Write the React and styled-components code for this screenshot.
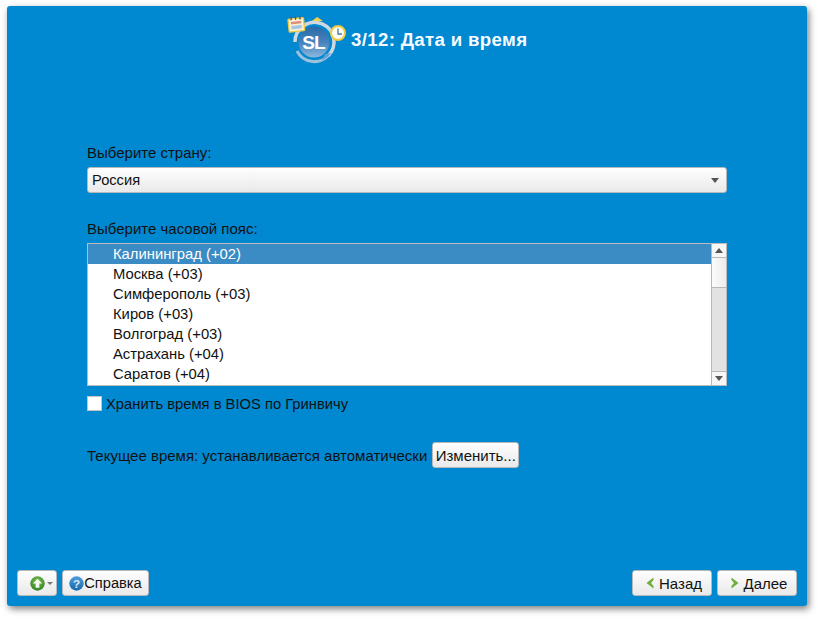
import React from 'react';
import styled, { createGlobalStyle } from 'styled-components';

const zones = [
  'Калининград (+02)',
  'Москва (+03)',
  'Симферополь (+03)',
  'Киров (+03)',
  'Волгоград (+03)',
  'Астрахань (+04)',
  'Саратов (+04)'
];

export default function App() {
  return (
    <>
      <GlobalStyle />
      <Window>
        <Header>
          <SlLogo />
          <Title>3/12: Дата и время</Title>
        </Header>
        <Content>
          <FieldLabel>Выберите страну:</FieldLabel>
          <Combo>
            <span>Россия</span>
            <Arrow />
          </Combo>
          <ListLabel>Выберите часовой пояс:</ListLabel>
          <ListBox>
            <Rows>
              {zones.map((zone, i) => (
                <Row key={zone} $selected={i === 0}>{zone}</Row>
              ))}
            </Rows>
            <ScrollBar>
              <ScrollEnd><Arrow $up /></ScrollEnd>
              <Thumb />
              <Track />
              <ScrollEnd $bottom><Arrow /></ScrollEnd>
            </ScrollBar>
          </ListBox>
          <CheckRow>
            <CheckBox />
            <span>Хранить время в BIOS по Гринвичу</span>
          </CheckRow>
          <TimeRow>
            <span>Текущее время: устанавливается автоматически</span>
            <Button $width={87}>Изменить...</Button>
          </TimeRow>
        </Content>
        <Footer>
          <UpButton $width={40}>
            <UpIcon />
            <SmallArrow />
          </UpButton>
          <HelpButton $width={87}>
            <HelpIcon />
            Справка
          </HelpButton>
          <Spacer />
          <NavButton $width={80}>
            <ChevronIcon $back />
            Назад
          </NavButton>
          <NavButton $width={80}>
            <ChevronIcon />
            Далее
          </NavButton>
        </Footer>
      </Window>
    </>
  );
}

function SlLogo() {
  return (
    <LogoSvg viewBox="0 0 60 54" width="60" height="54">
      <defs>
        <linearGradient id="ball" x1="0" y1="0" x2="0" y2="1">
          <stop offset="0" stopColor="#2a69a8" />
          <stop offset="0.55" stopColor="#4a86bf" />
          <stop offset="1" stopColor="#8db8de" />
        </linearGradient>
      </defs>
      <path d="M8 30 A19.5 19.5 0 1 1 41 44" fill="none" stroke="#cfd8e0" strokeWidth="3.5" />
      <path d="M41 44 A19.5 19.5 0 0 1 10 39" fill="none" stroke="#9fc0da" strokeWidth="3" />
      <path d="M35 49 L38 42 L45 41 Z" fill="#5f9fd4" />
      <circle cx="27" cy="30" r="15.5" fill="url(#ball)" />
      <path d="M25 9 L30 5 L36 9 Z" fill="#f2d24a" />
      <g transform="rotate(-6 13 12)">
        <rect x="1.5" y="6" width="15.5" height="13" rx="1" fill="#fbf5d8" stroke="#efc94a" strokeWidth="1.4" />
        <rect x="4" y="4" width="1.3" height="3.5" fill="#555" />
        <rect x="8.5" y="4" width="1.3" height="3.5" fill="#555" />
        <rect x="13" y="4" width="1.3" height="3.5" fill="#555" />
        <rect x="4" y="9" width="10.5" height="2.5" fill="#dd8f78" />
        <rect x="4" y="13" width="10.5" height="3.5" fill="#a9c4e0" />
      </g>
      <circle cx="51" cy="21" r="7" fill="#fdfdf6" stroke="#f0c93c" strokeWidth="2" />
      <path d="M51 16.5 V22 H55" fill="none" stroke="#4a78a8" strokeWidth="1.3" />
      <text x="26.5" y="37" textAnchor="middle" fontFamily="Liberation Sans, sans-serif" fontWeight="700" fontSize="19" fill="#fff" letterSpacing="-1">SL</text>
    </LogoSvg>
  );
}

function UpIcon() {
  return (
    <svg width="15" height="15" viewBox="0 0 16 16">
      <defs>
        <radialGradient id="upBall" cx="0.5" cy="0.35" r="0.7">
          <stop offset="0" stopColor="#7cc254" />
          <stop offset="1" stopColor="#2f7a22" />
        </radialGradient>
      </defs>
      <circle cx="8" cy="8" r="7.7" fill="url(#upBall)" />
      <path d="M8 3 L13 8 H10 V12.5 H6 V8 H3 Z" fill="#f4f8ef" />
    </svg>
  );
}

function HelpIcon() {
  return (
    <svg width="15" height="15" viewBox="0 0 16 16">
      <defs>
        <linearGradient id="helpBall" x1="0" y1="0" x2="0" y2="1">
          <stop offset="0" stopColor="#4f9fdc" />
          <stop offset="1" stopColor="#1567ad" />
        </linearGradient>
      </defs>
      <circle cx="8" cy="8" r="7.7" fill="url(#helpBall)" />
      <text x="8" y="12.5" textAnchor="middle" fontFamily="Liberation Sans, sans-serif" fontWeight="700" fontSize="12.5" fill="#dcebf7">?</text>
    </svg>
  );
}

function ChevronIcon({ $back }) {
  return (
    <ChevronSvg width="8" height="12" viewBox="0 0 8 12">
      <path d={$back ? 'M7.5 0.5 L0.5 6 L7.5 11.5 V9 L5 6 L7.5 3 Z' : 'M0.5 0.5 L7.5 6 L0.5 11.5 V9 L3 6 L0.5 3 Z'} fill="#6fae3c" />
    </ChevronSvg>
  );
}

const GlobalStyle = createGlobalStyle`
  html, body {
    margin: 0;
    height: 100%;
    background: #fff;
  }
  body {
    font-family: "Liberation Sans", Arial, sans-serif;
    font-size: 15px;
    color: #111;
  }
`;

const Window = styled.div`
  width: 800px;
  height: 600px;
  margin: 6px 0 0 7px;
  background: #0088d1;
  border-radius: 3px;
  box-shadow: 2px 3px 7px rgba(0, 0, 0, 0.5);
  display: flex;
  flex-direction: column;
`;

const Header = styled.div`
  height: 65px;
  padding-left: 280px;
  display: flex;
  align-items: center;
  gap: 5px;
`;

const LogoSvg = styled.svg`
  flex: none;
  margin-top: 1px;
`;

const Title = styled.div`
  font-size: 18.67px;
  font-weight: 700;
  color: #f6fbff;
  letter-spacing: 0.33px;
  margin: 2px 0 0 -1px;
`;

const Content = styled.div`
  width: 640px;
  margin: 73px 0 0 80px;
  display: flex;
  flex-direction: column;
`;

const FieldLabel = styled.div`
  height: 17px;
  line-height: 17px;
  margin-bottom: 6px;
`;

const ListLabel = styled(FieldLabel)`
  margin: 27px 0 6px;
`;

const Combo = styled.div`
  height: 26px;
  box-sizing: border-box;
  padding: 0 7px 0 4px;
  display: flex;
  align-items: center;
  justify-content: space-between;
  font-size: 14.67px;
  background: linear-gradient(#fefefe, #e9e9e9);
  border: 1px solid #b8b8b8;
  border-radius: 3px;
`;

const Arrow = styled.i`
  width: 0;
  height: 0;
  display: block;
  border-left: 4px solid transparent;
  border-right: 4px solid transparent;
  ${(p) => (p.$up ? 'border-bottom: 5px solid #555;' : 'border-top: 5px solid #555;')}
`;

const SmallArrow = styled.i`
  width: 0;
  height: 0;
  margin-left: 2px;
  border-left: 3px solid transparent;
  border-right: 3px solid transparent;
  border-top: 3px solid #777;
`;

const ListBox = styled.div`
  height: 143px;
  box-sizing: border-box;
  display: flex;
  background: #fff;
  border: 1px solid #bcbcbc;
`;

const Rows = styled.div`
  flex: 1;
  min-width: 0;
  overflow: hidden;
`;

const Row = styled.div`
  height: 20px;
  line-height: 20px;
  padding-left: 25px;
  font-size: 14.8px;
  background: ${(p) => (p.$selected ? '#3b8bc4' : 'transparent')};
  color: ${(p) => (p.$selected ? '#fff' : '#111')};
`;

const ScrollBar = styled.div`
  width: 14px;
  flex: none;
  display: flex;
  flex-direction: column;
  border-left: 1px solid #b8b8b8;
`;

const ScrollEnd = styled.div`
  height: 13px;
  flex: none;
  display: flex;
  align-items: center;
  justify-content: center;
  background: #f6f6f6;
  ${(p) => (p.$bottom ? 'border-top: 1px solid #b8b8b8;' : 'border-bottom: 1px solid #b8b8b8;')}
`;

const Thumb = styled.div`
  height: 29px;
  flex: none;
  background: linear-gradient(90deg, #fbfbfb, #ececec);
  border-bottom: 1px solid #b8b8b8;
`;

const Track = styled.div`
  flex: 1;
  background: #e2e2e2;
`;

const CheckRow = styled.div`
  height: 16px;
  margin-top: 10px;
  display: flex;
  align-items: center;
  gap: 4px;
  font-size: 14.75px;
`;

const CheckBox = styled.div`
  width: 15px;
  height: 15px;
  margin-bottom: 1px;
  box-sizing: border-box;
  background: #fff;
  border: 1px solid #c4c4c4;
`;

const TimeRow = styled.div`
  margin-top: 30px;
  height: 26px;
  display: flex;
  align-items: center;
  gap: 5px;
`;

const Button = styled.div`
  width: ${(p) => p.$width}px;
  height: 26px;
  box-sizing: border-box;
  flex: none;
  display: flex;
  align-items: center;
  justify-content: center;
  background: linear-gradient(#fefefe, #e9e9e9);
  border: 1px solid #b8b8b8;
  border-radius: 3px;
`;

const UpButton = styled(Button)`
  padding-left: 12px;
  justify-content: flex-start;
`;

const HelpButton = styled(Button)`
  margin-right: auto;
  font-size: 14.67px;
`;

const NavButton = styled(Button)`
  padding-left: 4px;
`;

const ChevronSvg = styled.svg`
  margin-right: 5px;
`;

const Spacer = styled.div`
  flex: 1;
`;

const Footer = styled.div`
  margin-top: auto;
  padding: 0 10px 10px;
  display: flex;
  gap: 5px;
`;
